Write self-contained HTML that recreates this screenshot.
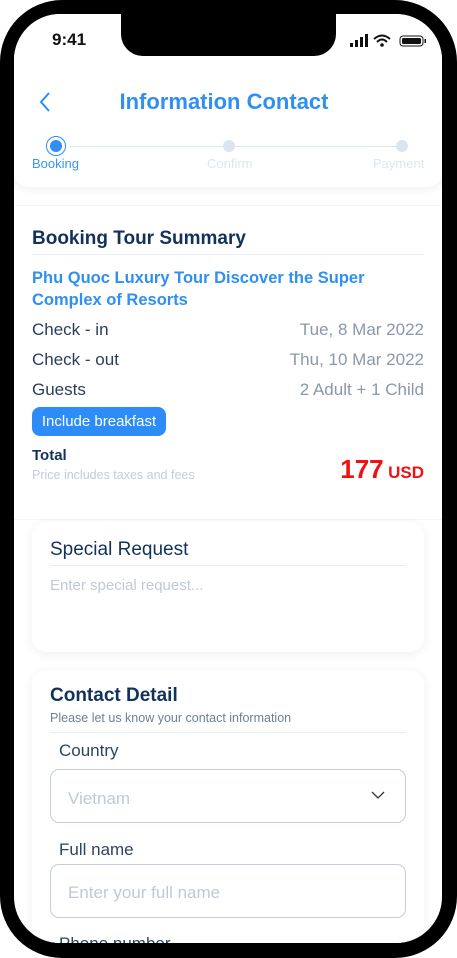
<!DOCTYPE html>
<html><head><meta charset="utf-8"><style>
*{margin:0;padding:0;box-sizing:border-box}
body{width:457px;height:958px;background:#fff;font-family:"Liberation Sans",sans-serif;position:relative;overflow:hidden}
.frame{position:absolute;left:0;top:0;width:457px;height:958px;border-radius:62px;background:#000}
.screen{position:absolute;left:14px;top:14px;width:428px;height:929px;border-radius:46px;background:#fff;overflow:hidden}
.notch{position:absolute;left:107px;top:-2px;width:215px;height:44px;background:#000;border-radius:0 0 22px 22px}
.a{position:absolute;white-space:nowrap}
.card{position:absolute;background:#fff;border-radius:14px;box-shadow:0 2px 10px rgba(20,40,80,.07)}
</style></head><body>
<div class="frame"></div>
<div class="screen">
 <div class="card" style="left:0;top:-20px;width:428px;height:193px;border-radius:0 0 14px 14px"></div>
 <div class="a" style="left:38px;top:16px;font-size:17px;font-weight:700;color:#111">9:41</div>
 <svg class="a" style="left:336px;top:20px" width="80" height="14" viewBox="0 0 80 14">
  <rect x="0" y="9" width="3" height="4" fill="#111"/><rect x="5" y="6" width="3" height="7" fill="#111"/><rect x="10" y="3" width="3" height="10" fill="#111"/><rect x="15" y="0" width="3" height="13" fill="#111"/>
  <path d="M24 5 Q32 -2 40 5 M27 8 Q32 3 37 8" stroke="#111" stroke-width="2" fill="none"/><circle cx="32" cy="11" r="1.8" fill="#111"/>
  <rect x="50" y="2" width="23" height="10" rx="3" fill="none" stroke="#111" stroke-width="1"/><rect x="52" y="4" width="19" height="6" rx="1.5" fill="#111"/><rect x="74.5" y="5" width="1.5" height="4" fill="#111"/>
 </svg>
 <svg class="a" style="left:24px;top:77px" width="14" height="22"><path d="M11 2 L3 11 L11 20" stroke="#2d8cf3" stroke-width="2" fill="none"/></svg>
 <div class="a" style="left:0;width:420px;text-align:center;top:75px;font-size:22px;font-weight:700;color:#2f8ff3">Information Contact</div>
 <div class="a" style="left:56px;top:132px;width:330px;height:1px;background:#dbe6f3"></div>
 <div class="a" style="left:32px;top:122px;width:20px;height:20px;border-radius:50%;border:1.5px solid #2f8ff3;background:#fff"></div>
 <div class="a" style="left:36px;top:126px;width:12px;height:12px;border-radius:50%;background:#2f8ff3"></div>
 <div class="a" style="left:209px;top:126px;width:12px;height:12px;border-radius:50%;background:#dbe5f0"></div>
 <div class="a" style="left:382px;top:126px;width:12px;height:12px;border-radius:50%;background:#dbe5f0"></div>
 <div class="a" style="left:18px;top:142px;font-size:13px;color:#3b94f2">Booking</div>
 <div class="a" style="left:193px;top:142px;font-size:13px;color:#dde6f0">Confirm</div>
 <div class="a" style="left:359px;top:142px;font-size:13px;color:#dde6f0">Payment</div>
 <div class="a" style="left:0;top:191px;width:428px;height:1px;background:#f2f4f7"></div>
 <div class="a" style="left:18px;top:214px;font-size:19px;font-weight:700;color:#13325b">Booking Tour Summary</div>
 <div class="a" style="left:18px;top:240px;width:392px;height:1px;background:#e8edf3"></div>
 <div class="a" style="left:18px;top:253px;font-size:16.5px;font-weight:700;color:#2f8ff3;line-height:22px">Phu Quoc Luxury Tour Discover the Super<br>Complex of Resorts</div>
 <div class="a" style="left:18px;top:306px;font-size:17px;color:#2b3d5a">Check - in</div>
 <div class="a" style="right:18px;top:306px;font-size:17px;color:#8b98a9">Tue, 8 Mar 2022</div>
 <div class="a" style="left:18px;top:336px;font-size:17px;color:#2b3d5a">Check - out</div>
 <div class="a" style="right:18px;top:336px;font-size:17px;color:#8b98a9">Thu, 10 Mar 2022</div>
 <div class="a" style="left:18px;top:366px;font-size:17px;color:#2b3d5a">Guests</div>
 <div class="a" style="right:18px;top:366px;font-size:17px;color:#8b98a9">2 Adult + 1 Child</div>
 <div class="a" style="left:18px;top:393px;width:134px;height:29px;border-radius:8px;background:#2d8cf7;color:#fff;font-size:15px;line-height:29px;text-align:center">Include breakfast</div>
 <div class="a" style="left:18px;top:433px;font-size:15px;font-weight:700;color:#13325b">Total</div>
 <div class="a" style="left:18px;top:454px;font-size:12.5px;color:#c3ccd8">Price includes taxes and fees</div>
 <div class="a" style="right:18px;top:440px;color:#f21010;font-weight:700"><span style="font-size:26px">177</span> <span style="font-size:17px">USD</span></div>
 <div class="a" style="left:0;top:505px;width:428px;height:1px;background:#f3f5f8"></div>
 <div class="card" style="left:18px;top:508px;width:392px;height:130px"></div>
 <div class="a" style="left:36px;top:525px;font-size:19px;color:#13325b">Special Request</div>
 <div class="a" style="left:36px;top:551px;width:356px;height:1px;background:#e8edf3"></div>
 <div class="a" style="left:36px;top:563px;font-size:15px;color:#c0c9d5">Enter special request...</div>
 <div class="card" style="left:18px;top:656px;width:392px;height:320px"></div>
 <div class="a" style="left:36px;top:671px;font-size:19px;color:#13325b;font-weight:600">Contact Detail</div>
 <div class="a" style="left:36px;top:697px;font-size:12.5px;color:#6d7f96">Please let us know your contact information</div>
 <div class="a" style="left:36px;top:718px;width:356px;height:1px;background:#e8edf3"></div>
 <div class="a" style="left:45px;top:727px;font-size:17px;color:#2b4466">Country</div>
 <div class="a" style="left:36px;top:755px;width:356px;height:54px;border:1px solid #c4cedb;border-radius:9px"></div>
 <div class="a" style="left:54px;top:775px;font-size:17px;color:#c0cad6">Vietnam</div>
 <svg class="a" style="left:356px;top:776px" width="16" height="10"><path d="M2 2 L8 8 L14 2" stroke="#333" stroke-width="1.3" fill="none"/></svg>
 <div class="a" style="left:45px;top:826px;font-size:17px;color:#2b4466">Full name</div>
 <div class="a" style="left:36px;top:850px;width:356px;height:54px;border:1px solid #c4cedb;border-radius:9px"></div>
 <div class="a" style="left:54px;top:869px;font-size:17px;color:#c0cad6">Enter your full name</div>
 <div class="a" style="left:45px;top:920px;font-size:17px;color:#2b4466">Phone number</div>
 <div class="notch"></div>
</div>
</body></html>
